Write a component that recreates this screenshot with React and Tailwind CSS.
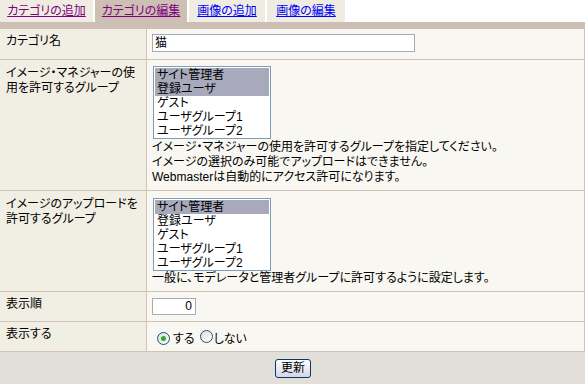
import React from "react";

const groups = ["サイト管理者", "登録ユーザ", "ゲスト", "ユーザグループ1", "ユーザグループ2"];

function GroupList({ selected }) {
  return (
    <div className="w-[118px] h-[73px] border border-[#7f9db9] bg-white p-px overflow-hidden">
      {groups.map((g) => (
        <div
          key={g}
          className={
            "h-[14px] leading-[14px] px-[2px] whitespace-nowrap " +
            (selected.includes(g) ? "bg-[#a8a9ba]" : "")
          }
        >
          {g}
        </div>
      ))}
    </div>
  );
}

function Radio({ checked }) {
  return (
    <span className="inline-flex w-[13px] h-[13px] rounded-full border border-[#1c5180] bg-linear-to-br from-[#dcdcd6] to-white items-center justify-center">
      {checked && <span className="w-[5px] h-[5px] rounded-full bg-[#2fa82f]" />}
    </span>
  );
}

function Row({ label, children, labelClass = "", valueClass = "" }) {
  return (
    <div className="flex border-b border-[#d0c3b6]">
      <div className={"w-[147px] shrink-0 bg-[#f1eee3] border-r border-[#d0c3b6] pl-[6px] pt-[5px] leading-[15px] " + labelClass}>
        {label}
      </div>
      <div className={"flex-1 bg-[#f8f7f1] pl-[5px] " + valueClass}>{children}</div>
    </div>
  );
}

export default function App() {
  return (
    <div className="w-[585px] h-[384px] overflow-hidden bg-white text-black text-[12px] font-['Liberation_Sans','Noto_Sans_CJK_JP',sans-serif] [font-feature-settings:'palt']">
      {/* タブ */}
      <div className="flex gap-[2px] h-[22px]">
        <div className="w-[93px] bg-[#efece1] flex items-center justify-center">
          <a href="#" className="text-[#800080] underline">カテゴリの追加</a>
        </div>
        <div className="w-[92px] bg-[#cdbfb3] flex items-center justify-center">
          <a href="#" className="text-[#800080] underline">カテゴリの編集</a>
        </div>
        <div className="w-[76px] bg-[#efece1] flex items-center justify-center">
          <a href="#" className="text-[#0000ff] underline">画像の追加</a>
        </div>
        <div className="w-[78px] bg-[#efece1] flex items-center justify-center">
          <a href="#" className="text-[#0000ff] underline">画像の編集</a>
        </div>
      </div>
      <div className="h-[7px] bg-[#cdbfb3]" />

      {/* フォーム */}
      <div className="border-r border-[#d0c3b6]">
        <Row label="カテゴリ名" valueClass="pt-[5px] pb-[7px]">
          <div className="w-[263px] h-[18px] border border-[#a5acb2] bg-white px-[2px] leading-[16px]">猫</div>
        </Row>

        <Row
          label={<>イメージ・マネジャーの使<br />用を許可するグループ</>}
          labelClass="pt-[6px]"
          valueClass="pt-[6px] pb-[5px]"
        >
          <div className="ml-px">
            <GroupList selected={["サイト管理者", "登録ユーザ"]} />
          </div>
          <div className="leading-[15px] mt-px">
            イメージ・マネジャーの使用を許可するグループを指定してください。<br />
            イメージの選択のみ可能でアップロードはできません。<br />
            Webmasterは自動的にアクセス許可になります。
          </div>
        </Row>

        <Row
          label={<>イメージのアップロードを<br />許可するグループ</>}
          labelClass="pt-[6px]"
          valueClass="pt-[7px] pb-[5px]"
        >
          <div className="ml-px">
            <GroupList selected={["サイト管理者"]} />
          </div>
          <div className="leading-[15px]">一般に、モデレータと管理者グループに許可するように設定します。</div>
        </Row>

        <Row label="表示順" valueClass="pt-[6px] pb-[6px]">
          <div className="w-[44px] h-[17px] border border-[#a5acb2] bg-white pr-[3px] text-right leading-[15px]">0</div>
        </Row>

        <Row label="表示する" valueClass="pt-[9px] pb-[5px]">
          <div className="flex items-center h-[15px] pl-[5px]">
            <Radio checked />
            <span className="ml-[3px]">する</span>
            <span className="ml-[5px]"><Radio /></span>
            <span className="ml-px">しない</span>
          </div>
        </Row>
      </div>

      {/* フッター */}
      <div className="bg-[#e1dfd7] py-[7px] flex justify-center">
        <button className="w-[36px] h-[19px] rounded-[3px] border border-[#003c74] bg-linear-to-b from-white to-[#d6d6e4] leading-[17px] text-[12px] ml-[1px]">
          更新
        </button>
      </div>
    </div>
  );
}
